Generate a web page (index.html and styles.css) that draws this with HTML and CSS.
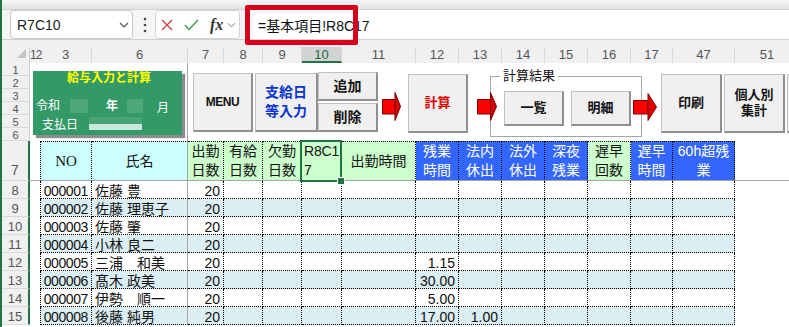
FILE: index.html
```html
<!DOCTYPE html>
<html lang="ja">
<head>
<meta charset="UTF-8">
<meta name="viewport" content="width=device-width, initial-scale=1.0">
<title>給与入力と計算</title>
<link rel="stylesheet" href="styles.css">
</head>
<body>

<div class="app">
    <div class="ribbon"></div>

    <!-- formula bar -->
    <div class="fbar">
        <div class="namebox">
            <span>R7C10</span>
            <svg class="chev" width="10" height="6" viewBox="0 0 10 6"><polyline points="1,1 5,5 9,1" fill="none" stroke="#555" stroke-width="1.2"/></svg>
        </div>
        <svg class="vdots" width="4" height="16" viewBox="0 0 4 16"><circle cx="2" cy="2" r="1.3" fill="#444"/><circle cx="2" cy="8" r="1.3" fill="#444"/><circle cx="2" cy="14" r="1.3" fill="#444"/></svg>
        <div class="fnbox">
            <svg width="12" height="12" viewBox="0 0 12 12"><path d="M1 1 L11 11 M11 1 L1 11" stroke="#d0383c" stroke-width="1.3"/></svg>
            <svg class="ok" width="15" height="12" viewBox="0 0 15 12"><polyline points="1,6 5,10.5 14,1" fill="none" stroke="#3c9a50" stroke-width="1.4"/></svg>
            <span class="fx">fx</span>
            <svg class="chev" width="9" height="6" viewBox="0 0 10 6"><polyline points="1,1 5,5 9,1" fill="none" stroke="#777" stroke-width="1.1"/></svg>
        </div>
        <div class="formula">=基本項目!R8C17</div>
    </div>
    <div class="mark"></div>

    <!-- worksheet -->
    <div class="sheet">
        <div class="row colhead">
            <div class="corner"><span class="tri"></span></div>
            <div class="narrow">12</div>
            <div>3</div><div>6</div><div>7</div><div>8</div><div>9</div>
            <div class="sel">10</div>
            <div>11</div><div>12</div><div>13</div><div>14</div><div>15</div><div>16</div><div>17</div><div>47</div><div>51</div>
        </div>

        <div class="row tools">
            <div class="rows6"><span>1</span><span>2</span><span>3</span><span>4</span><span>5</span><span>6</span></div>
            <div class="panel-area">
                <div class="panel">
                    <div class="panel-title">給与入力と計算</div>
                    <div class="panel-date">
                        <span>令和</span><i class="sq sq1"></i><b>年</b><i class="sq sq2"></i><span class="mon">月</span>
                    </div>
                    <div class="panel-pay">
                        <span>支払日</span><i class="paybox"></i>
                    </div>
                </div>
            </div>
            <div class="btn-area">
                <div class="btn menu">MENU</div>
                <div class="btn blue">支給日<br>等入力</div>
                <div class="pair">
                    <div class="btn">追加</div>
                    <div class="btn">削除</div>
                </div>
                <svg class="arrow a1" width="19" height="29" viewBox="0 0 19 29"><polygon points="0.5,7.5 13,7.5 13,22 0.5,22" fill="#ff0000" stroke="#7a0000"/><polygon points="13,0.5 18.5,14.5 13,28.5" fill="#d80000" stroke="#7a0000"/></svg>
                <div class="btn calc">計算</div>
                <svg class="arrow a2" width="20" height="29" viewBox="0 0 20 29"><polygon points="0.5,7.5 13.5,7.5 13.5,22 0.5,22" fill="#ff0000" stroke="#7a0000"/><polygon points="13.5,0.5 19.5,14.5 13.5,28.5" fill="#d80000" stroke="#7a0000"/></svg>
                <div class="group">
                    <span class="group-title">計算結果</span>
                    <div class="btn small">一覧</div>
                    <div class="btn small">明細</div>
                </div>
                <svg class="arrow a3" width="24" height="28" viewBox="0 0 24 28"><polygon points="0.5,7.5 15,7.5 15,21 0.5,21" fill="#ff0000" stroke="#7a0000"/><polygon points="15,0.5 23.5,14 15,27.5" fill="#e00000" stroke="#7a0000"/></svg>
                <div class="btn print">印刷</div>
                <div class="btn print">個人別<br>集計</div>
                <div class="btn print"></div>
            </div>
        </div>

        <div class="row head">
            <div class="rh">7</div>
            <div class="blank"></div>
            <div class="cyan no-h">NO</div>
            <div class="cyan name-h">氏名</div>
            <div class="green">出勤<br>日数</div>
            <div class="green">有給<br>日数</div>
            <div class="green">欠勤<br>日数</div>
            <div class="green cur">R8C17</div>
            <div class="green">出勤時間</div>
            <div class="blue">残業<br>時間</div>
            <div class="blue">法内<br>休出</div>
            <div class="blue">法外<br>休出</div>
            <div class="blue">深夜<br>残業</div>
            <div class="green">遅早<br>回数</div>
            <div class="blue">遅早<br>時間</div>
            <div class="blue">60h超残<br>業</div>
            <div class="blank"></div>
        </div>

        <div class="row data">
            <div class="rh">8</div><div class="blank"></div>
            <div class="no">000001</div><div class="nm">佐藤 豊</div><div class="n">20</div>
            <div></div><div></div><div></div><div></div><div class="n"></div><div class="n"></div>
            <div></div><div></div><div></div><div></div><div></div><div class="blank"></div>
        </div>
        <div class="row data alt">
            <div class="rh">9</div><div class="blank"></div>
            <div class="no">000002</div><div class="nm">佐藤 理恵子</div><div class="n">20</div>
            <div></div><div></div><div></div><div></div><div class="n"></div><div class="n"></div>
            <div></div><div></div><div></div><div></div><div></div><div class="blank"></div>
        </div>
        <div class="row data">
            <div class="rh">10</div><div class="blank"></div>
            <div class="no">000003</div><div class="nm">佐藤 肇</div><div class="n">20</div>
            <div></div><div></div><div></div><div></div><div class="n"></div><div class="n"></div>
            <div></div><div></div><div></div><div></div><div></div><div class="blank"></div>
        </div>
        <div class="row data alt">
            <div class="rh">11</div><div class="blank"></div>
            <div class="no">000004</div><div class="nm">小林 良二</div><div class="n">20</div>
            <div></div><div></div><div></div><div></div><div class="n"></div><div class="n"></div>
            <div></div><div></div><div></div><div></div><div></div><div class="blank"></div>
        </div>
        <div class="row data">
            <div class="rh">12</div><div class="blank"></div>
            <div class="no">000005</div><div class="nm">三浦　和美</div><div class="n">20</div>
            <div></div><div></div><div></div><div></div><div class="n">1.15</div><div class="n"></div>
            <div></div><div></div><div></div><div></div><div></div><div class="blank"></div>
        </div>
        <div class="row data alt">
            <div class="rh">13</div><div class="blank"></div>
            <div class="no">000006</div><div class="nm">髙木 政美</div><div class="n">20</div>
            <div></div><div></div><div></div><div></div><div class="n">30.00</div><div class="n"></div>
            <div></div><div></div><div></div><div></div><div></div><div class="blank"></div>
        </div>
        <div class="row data">
            <div class="rh">14</div><div class="blank"></div>
            <div class="no">000007</div><div class="nm">伊勢　順一</div><div class="n">20</div>
            <div></div><div></div><div></div><div></div><div class="n">5.00</div><div class="n"></div>
            <div></div><div></div><div></div><div></div><div></div><div class="blank"></div>
        </div>
        <div class="row data alt">
            <div class="rh">15</div><div class="blank"></div>
            <div class="no">000008</div><div class="nm">後藤 純男</div><div class="n">20</div>
            <div></div><div></div><div></div><div></div><div class="n">17.00</div><div class="n">1.00</div>
            <div></div><div></div><div></div><div></div><div></div><div class="blank"></div>
        </div>
    </div>
</div>

</body>
</html>
```

FILE: styles.css
```css
/* page */
* {
    box-sizing: border-box;
}
body {
    margin: 0;
    font-family: "Liberation Sans", "Noto Sans CJK JP", sans-serif;
    color: #111;
    background: #fff;
}
.app {
    position: relative;
    width: 789px;
    height: 327px;
    overflow: hidden;
    border-left: 2px solid #217346; /* window edge */
}
.ribbon {
    height: 10px;
    background: linear-gradient(#f6f6f6, #e3e3e3);
    border-bottom: 1px solid #d0d0d0;
}

/* formula bar */
.fbar {
    display: flex;
    height: 30px;
    background: #f5f5f5;
    border-bottom: 1px solid #d0d0d0;
}
.namebox {
    display: flex;
    align-items: center;
    width: 123px;
    margin-left: 8px;
    padding: 0 3px 0 6px;
    background: #fff;
    border: 1px solid #c8c8c8;
    border-radius: 4px;
    font-size: 14px;
    color: #222;
}
.namebox .chev {
    margin-left: auto;
}
.vdots {
    align-self: center;
    margin-left: 10px;
}
.fnbox {
    display: flex;
    align-items: center;
    width: 85px;
    margin-left: 8px;
    padding-left: 5px;
    background: #fff;
    border: 1px solid #d4d4d4;
    border-radius: 4px;
}
.fnbox .ok {
    margin-left: 11px;
}
.fx {
    margin-left: 11px;
    font-family: "Liberation Serif", serif;
    font-style: italic;
    font-weight: bold;
    font-size: 16px;
    color: #333;
}
.fnbox .chev {
    margin-left: 4px;
}
.formula {
    flex: 1;
    display: flex;
    align-items: center;
    margin-left: 5px;
    padding-left: 13px;
    background: #fff;
    font-size: 14px;
    color: #111;
}
/* red highlight drawn over the formula */
.mark {
    position: absolute;
    left: 243px;
    top: 5px;
    width: 113px;
    height: 40px;
    border: 5px solid #d9001b;
    border-radius: 2px;
}

/* grid */
.row {
    display: grid;
    grid-template-columns: 28px 10px 52px 96px 36px 39px 39px 40px 74px 43px 43px 43px 43px 43px 42px 62px 65px;
}

/* column letters */
.colhead {
    height: 23px;
    align-items: end;
    background: #f0f0f0;
}
.colhead > div {
    height: 16px;
    line-height: 16px;
    text-align: center;
    font-size: 13px;
    color: #555;
    border-right: 1px solid #d8d8d8;
}
.colhead > .corner {
    border-right: 1px solid #d0d0d0;
}
.tri {
    display: block;
    width: 0;
    height: 0;
    margin: 2px 0 0 15px;
    border-left: 9px solid transparent;
    border-bottom: 9px solid #c4c4c4;
}
.colhead > .narrow {
    border-right: none;
    text-align: left;
    font-size: 12px;
    letter-spacing: -1px;
    white-space: nowrap;
}
.colhead > .sel {
    background: #d3d3d3;
    color: #1c6b3f;
    border-bottom: 2px solid #217346;
}

/* rows 1-6 with the shapes */
.tools {
    height: 78px;
}
.rows6 {
    display: flex;
    flex-direction: column;
    background: #f0f0f0;
    border-right: 1px solid #d0d0d0;
}
.rows6 span {
    height: 13px;
    padding-top: 1px;
    line-height: 12px;
    font-size: 11px;
    color: #555;
    text-align: center;
    border-bottom: 1px solid #dadada;
}
.panel-area {
    grid-column: 2 / 5;
    padding: 7px 0 0 3px;
    border-right: 1px solid #a6a6a6; /* freeze line */
}
.panel {
    width: 149px;
    height: 64px;
    padding-left: 3px;
    background: #339966;
    box-shadow: 3px 3px 1px rgba(0, 0, 0, 0.45);
    color: #fff;
    font-size: 12px;
}
.panel-title {
    margin-top: 1px;
    line-height: 14px;
    text-align: center;
    font-weight: bold;
    color: #ffff00;
}
.panel-date {
    display: flex;
    align-items: center;
    height: 15px;
    margin-top: 13px;
}
.panel-date span,
.panel-date b {
    line-height: 14px;
}
.sq {
    display: block;
    height: 14px;
    background: #4fa87c;
}
.sq1 {
    width: 18px;
    margin: 0 18px 0 10px;
}
.sq2 {
    width: 16px;
    margin: 0 14px 0 9px;
}
.mon {
    margin-top: 4px;
}
.panel-pay {
    display: flex;
    align-items: center;
    height: 13px;
    margin-top: 4px;
    padding-left: 6px;
}
.paybox {
    display: block;
    width: 53px;
    height: 13px;
    margin-left: 11px;
    background: linear-gradient(#47a477 0, #47a477 7px, #cbe9da 7px);
}

.btn-area {
    grid-column: 5 / -1;
    display: flex;
    align-items: flex-start;
    padding-left: 5px;
}
.btn-area > * {
    flex: none;
}
.btn {
    display: flex;
    align-items: center;
    justify-content: center;
    text-align: center;
    background: #f0f0f0;
    border: 1px solid #c2c2c2;
    border-right: 2px solid #8f8f8f;
    border-bottom: 2px solid #8f8f8f;
    font-weight: bold;
    font-size: 13px;
    line-height: 18px;
    color: #111;
}
.menu {
    width: 60px;
    height: 59px;
    margin-top: 10px;
    font-size: 12px;
    letter-spacing: -0.5px;
}
.btn.blue {
    width: 63px;
    height: 59px;
    margin: 10px 0 0 2px;
    font-size: 14px;
    line-height: 19px;
    color: #0a35d0;
}
.pair {
    display: flex;
    flex-direction: column;
    gap: 2px;
    width: 60px;
    margin-top: 9px;
}
.pair .btn {
    height: 29px;
    font-size: 14px;
}
.arrow {
    position: relative;
    z-index: 1;
}
.a1 {
    margin: 29px 0 0 4px;
}
.calc {
    width: 60px;
    height: 59px;
    margin: 11px 0 0 7px;
    color: #e00000;
}
.a2 {
    margin: 29px -7px 0 9px;
}
.group {
    position: relative;
    display: flex;
    gap: 7px;
    width: 152px;
    height: 61px;
    margin-top: 13px;
    padding: 14px 0 0 13px;
    border: 1px solid #a8a8a8;
}
.group-title {
    position: absolute;
    top: -9px;
    left: 9px;
    padding: 0 3px;
    background: #fff;
    font-size: 13px;
    line-height: 16px;
}
.small {
    width: 60px;
    height: 35px;
}
.a3 {
    margin: 30px 0 0 -9px;
}
.print {
    width: 61px;
    height: 59px;
    margin: 11px 0 0 2px;
    line-height: 16px;
}
.a3 + .print {
    margin-left: 4px;
}

/* row 7 headings */
.head {
    height: 40px;
}
.head > div {
    display: flex;
    align-items: center;
    justify-content: center;
    text-align: center;
    font-size: 14px;
    line-height: 19px;
    border-top: 1px dotted #000;
    border-right: 1px dotted #000;
    border-bottom: 1px solid #a6a6a6;
}
.head > .rh {
    align-items: flex-end;
    border-top: none;
    border-right: 2px solid #217346;
    border-bottom: 1px solid #dadada;
}
.head > .blank {
    border-top: none;
    border-right: none;
}
.cyan {
    background: #ccffff;
}
.green {
    background: #ccffcc;
}
.head > .blue {
    background: #3366ff;
    color: #fff;
}
.head > .no-h {
    border-left: 1px dotted #000;
    font-family: "Liberation Serif", serif;
    font-size: 15px;
}
.head > .name-h {
    border-right: 1px solid #a6a6a6;
}
.head > .cur {
    position: relative;
    align-items: flex-start;
    justify-content: flex-start;
    padding: 0 0 0 2px;
    text-align: left;
    word-break: break-all;
    letter-spacing: -0.2px;
}
.cur::after {
    content: "";
    position: absolute;
    left: -2px;
    top: -2px;
    right: -1px;
    bottom: -2px;
    border: 2px solid #217346;
}
.cur::before {
    content: "";
    position: absolute;
    right: -4px;
    bottom: -5px;
    z-index: 2;
    width: 6px;
    height: 6px;
    background: #217346;
    border: 1px solid #fff;
}

/* data rows */
.rh {
    background: #f0f0f0;
    color: #555;
    font-size: 13px;
    text-align: center;
}
.data {
    height: 18px;
    font-size: 14px;
    line-height: 20px;
}
.data > div {
    overflow: hidden;
    white-space: nowrap;
    border-right: 1px dotted #000;
    border-bottom: 1px dotted #000;
}
.data > .rh {
    border-right: 2px solid #217346;
    border-bottom: 1px solid #dadada;
}
.data > .blank {
    border: none;
}
.data.alt > div {
    background: #daeef3;
}
.data.alt > .rh {
    background: #f0f0f0;
}
.data.alt > .blank {
    background: #fff;
}
.data > .no {
    border-left: 1px dotted #000;
    padding-right: 3px;
    text-align: right;
    letter-spacing: -0.4px;
}
.data > .nm {
    padding-left: 3px;
    border-right: 1px solid #a6a6a6;
}
.data > .n {
    padding-right: 3px;
    text-align: right;
}
```
